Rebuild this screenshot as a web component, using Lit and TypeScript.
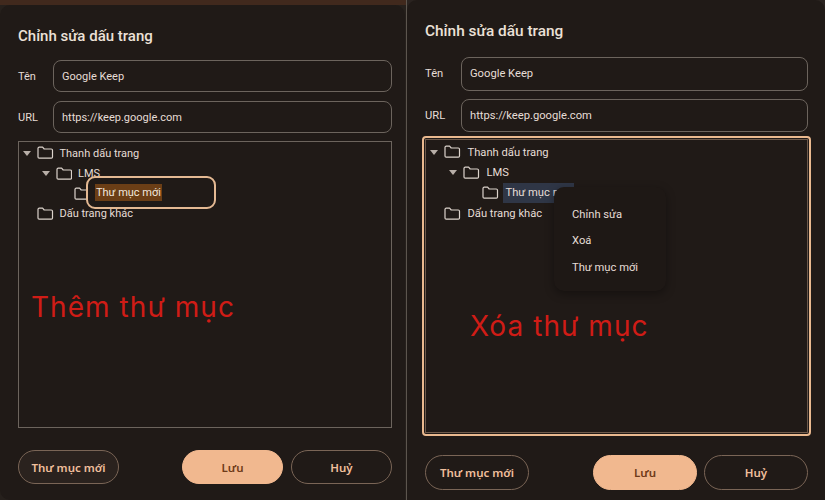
import { LitElement, html, css, svg } from "lit";
import { customElement, property } from "lit/decorators.js";

const folder = svg`<path d="M1 2.4A1.2 1.2 0 0 1 2.2 1.2H5.6L7.2 3H14.3A1.2 1.2 0 0 1 15.5 4.2V11A1.2 1.2 0 0 1 14.3 12.2H2.2A1.2 1.2 0 0 1 1 11Z" fill="none" stroke="currentColor" stroke-width="1.2" stroke-linejoin="round"/>`;

interface Row { depth: number; label: string; open?: boolean; selected?: boolean; }

const ROWS: Row[] = [
  { depth: 0, label: "Thanh dấu trang", open: true },
  { depth: 1, label: "LMS", open: true },
  { depth: 2, label: "Thư mục mới", selected: true },
  { depth: 0, label: "Dấu trang khác" },
];

@customElement("bookmark-panel")
export class BookmarkPanel extends LitElement {
  @property({ reflect: true }) variant: "add" | "delete" = "add";

  static styles = css`
    :host {
      display: flex;
      flex-direction: column;
      position: relative;
      box-sizing: border-box;
      background: #201a17;
      color: #e6ddd6;
      font-family: "Roboto", "Noto Sans", sans-serif;
      font-size: 11px;
      --h: 32px;
      --depth: 18.5px;
      --indent: 4px;
      --row: 20.2px;
    }
    :host([variant="add"]) {
      width: 405px;
      height: 495px;
      padding: 21px 13px 0 18px;
      border-radius: 10px 10px 0 10px;
    }
    :host([variant="delete"]) {
      width: 418px;
      height: 500px;
      padding: 21px 17px 0 18px;
      border-radius: 10px 10px 0 0;
      font-size: 11.2px;
      --h: 33.5px;
      --depth: 19px;
      --row: 20.4px;
    }
    .title {
      font-size: 15px;
      font-weight: 500;
      line-height: 20px;
      color: #ece1d8;
      margin-bottom: 14px;
    }
    :host([variant="delete"]) .title { font-size: 15.4px; margin-bottom: 16px; }
    .field { display: flex; align-items: center; margin-bottom: 9px; }
    :host([variant="delete"]) .field { margin-bottom: 8px; }
    .field label { width: 35px; flex: none; }
    :host([variant="delete"]) .field label { width: 36px; }
    .input {
      flex: 1;
      box-sizing: border-box;
      height: var(--h);
      display: flex;
      align-items: center;
      padding-left: 8px;
      border: 1px solid #6c645d;
      border-radius: 8px;
    }
    .tree {
      box-sizing: border-box;
      height: 287px;
      padding-top: 1px;
      border: 1px solid #6c645d;
      position: relative;
    }
    :host([variant="add"]) .tree { margin-top: -1px; }
    :host([variant="delete"]) .focus {
      margin: -4px -3px 0 -3px;
      border: 2px solid #eab98f;
      border-radius: 4px;
      padding: 1px;
    }
    :host([variant="delete"]) .tree {
      height: 294px;
      padding-top: 2px;
      border: 1px solid #6e5a4c;
    }
    .row {
      height: var(--row);
      display: flex;
      align-items: center;
      padding-left: calc(var(--indent) + var(--d) * var(--depth));
    }
    .caret {
      width: 0;
      height: 0;
      margin-right: 6px;
      border-left: 4px solid transparent;
      border-right: 4px solid transparent;
      border-top: 5px solid #b8afa8;
      flex: none;
    }
    .spacer { width: 14px; flex: none; }
    .row svg { width: 16.5px; height: 13.5px; flex: none; color: #dcd3cc; }
    .text { margin-left: 5px; padding: 0 2px 0 1px; white-space: nowrap; }
    :host([variant="delete"]) .text { margin-left: 6px; }
    :host([variant="delete"]) .text.sel {
      background: #2f3646;
      line-height: 20px;
      width: 66px;
      margin-left: 4px;
      padding-left: 3px;
    }
    .rename {
      position: absolute;
      left: 67px;
      top: 34px;
      box-sizing: border-box;
      width: 130px;
      height: 33px;
      background: #201a17;
      border: 2px solid #e4b993;
      border-radius: 9px;
      display: flex;
      align-items: center;
      padding-left: 7px;
    }
    .rename span { background: #6b3e16; line-height: 17px; padding: 0 1px; color: #f2e8df; }
    .menu {
      position: absolute;
      left: 128px;
      top: 47px;
      width: 112px;
      height: 104px;
      box-sizing: border-box;
      padding: 14px 0 0 18px;
      background: #1e1815;
      border-radius: 10px;
      box-shadow: 0 3px 10px rgba(0, 0, 0, 0.35);
      display: flex;
      flex-direction: column;
    }
    .menu div { height: 26.5px; display: flex; align-items: center; }
    .actions { display: flex; gap: 8px; margin-top: 22px; }
    :host([variant="delete"]) .actions { margin-top: 19px; gap: 7px; }
    .btn {
      box-sizing: border-box;
      height: 34px;
      width: 101px;
      display: flex;
      align-items: center;
      justify-content: center;
      border: 1px solid #7a6556;
      border-radius: 17px;
      color: #f0bf9c;
      font-size: 11.5px;
      font-weight: 600;
      font-family: "Noto Sans", sans-serif;
    }
    :host([variant="delete"]) .btn { height: 35px; width: 104px; border-radius: 18px; }
    :host([variant="add"]) .new { background: #2a221e; }
    .new { margin-right: auto; }
    .save { background: #f1b88f; border-color: #f1b88f; color: #6e3a19; }
    .note {
      position: absolute;
      color: #d01c16;
      font-family: "Inter", "Noto Sans", sans-serif;
      font-size: 28px;
      letter-spacing: 1.05px;
      line-height: 34px;
      white-space: nowrap;
    }
    :host([variant="add"]) .note { left: 31px; top: 285px; }
    :host([variant="delete"]) .note { left: 63px; top: 309px; }
  `;

  private renderRow(r: Row) {
    const isDelete = this.variant === "delete";
    const expandable = r.open !== undefined;
    return html`<div class="row" style="--d:${r.depth}">
      ${expandable ? html`<span class="caret"></span>` : html`<span class="spacer"></span>`}
      <svg viewBox="0 0 16.5 13.5">${folder}</svg>
      <span class="text ${r.selected && isDelete ? "sel" : ""}">
        ${r.selected && isDelete ? "Thư mục m" : r.selected ? "" : r.label}
      </span>
    </div>`;
  }

  render() {
    const isDelete = this.variant === "delete";
    return html`
      <div class="title">Chỉnh sửa dấu trang</div>
      <div class="field"><label>Tên</label><div class="input">Google Keep</div></div>
      <div class="field"><label>URL</label><div class="input">https://keep.google.com</div></div>
      <div class="focus">
        <div class="tree">
          ${ROWS.map((r) => this.renderRow(r))}
          ${isDelete
            ? html`<div class="menu"><div>Chỉnh sửa</div><div>Xoá</div><div>Thư mục mới</div></div>`
            : html`<div class="rename"><span>Thư mục mới</span></div>`}
        </div>
      </div>
      <div class="actions">
        <div class="btn new">Thư mục mới</div>
        <div class="btn save">Lưu</div>
        <div class="btn">Huỷ</div>
      </div>
      <div class="note">${isDelete ? "Xóa thư mục" : "Thêm thư mục"}</div>
    `;
  }
}

@customElement("app-root")
export class AppRoot extends LitElement {
  static styles = css`
    :host { display: flex; width: 840px; height: 500px; background: #fff; overflow: hidden; }
    .stage { display: flex; width: 825px; height: 500px; background: #2a2320; }
    .slot {
      display: flex;
      flex-direction: column;
      width: 407px;
      flex: none;
      box-sizing: border-box;
      padding-top: 5px;
      background: linear-gradient(#41291d 0 5px, #26201c 5px);
      border-right: 1px solid #5c554e;
    }
    .slot bookmark-panel { flex: none; }
  `;
  render() {
    return html`<div class="stage">
      <div class="slot"><bookmark-panel variant="add"></bookmark-panel></div>
      <bookmark-panel variant="delete"></bookmark-panel>
    </div>`;
  }
}
